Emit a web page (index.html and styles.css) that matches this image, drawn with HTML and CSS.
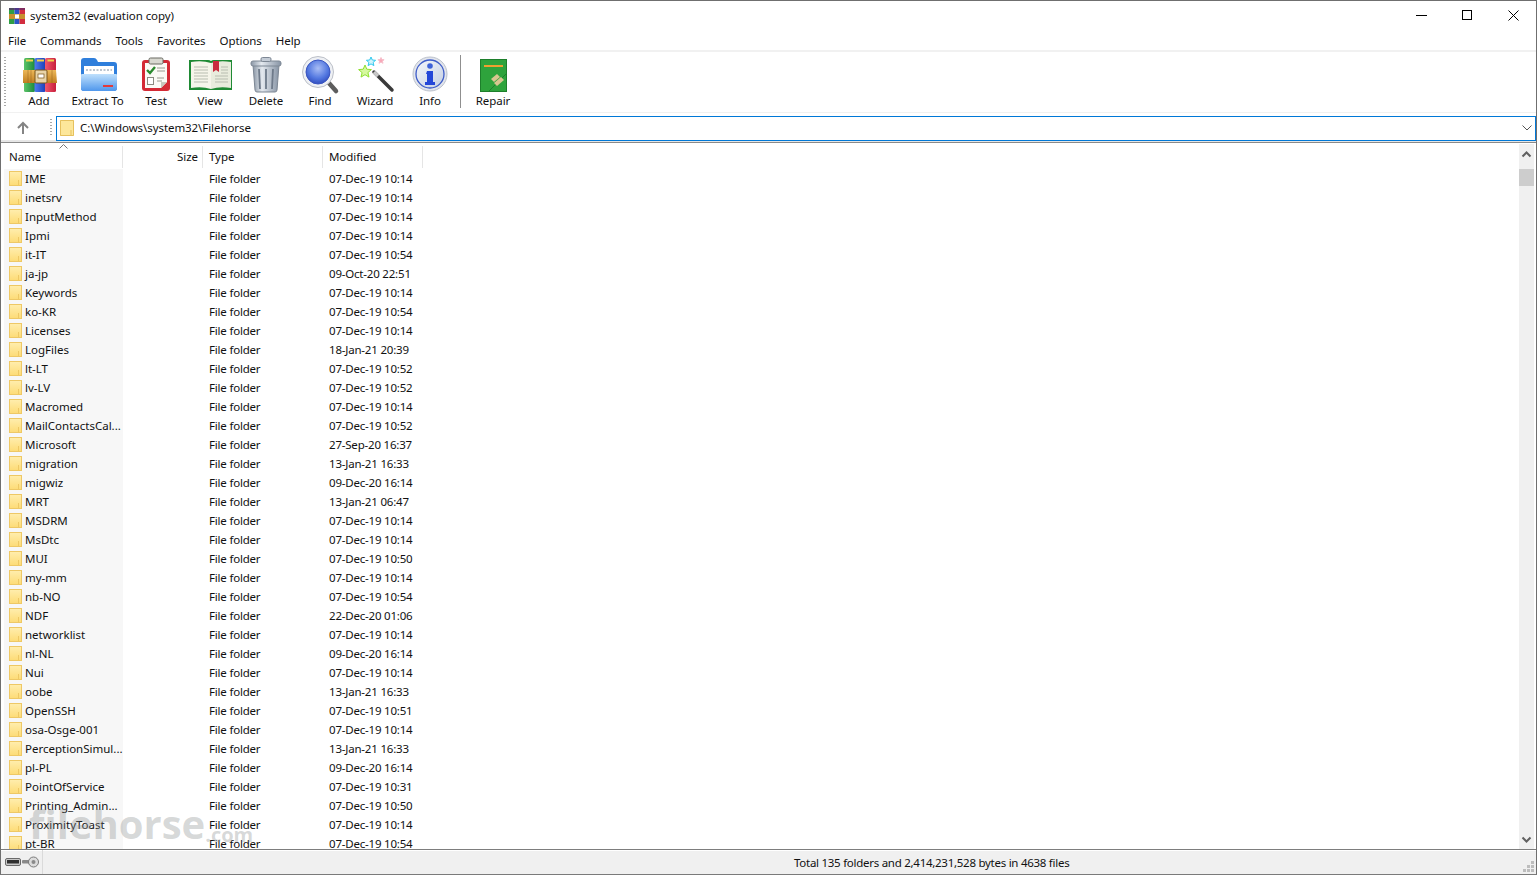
FILE: index.html
```html
<!DOCTYPE html>
<html lang="en">
<head>
<meta charset="utf-8">
<title>system32 (evaluation copy)</title>
<link rel="stylesheet" href="styles.css">
</head>
<body>
<div class="app">
  <header class="titlebar">
    <svg class="app-icon" width="16" height="16" viewBox="0 0 16 16"><rect x="0" y="0" width="5.5" height="16" fill="#2f9e44"/><rect x="5.5" y="0" width="5" height="16" fill="#2b55c8"/><rect x="10.5" y="0" width="5.5" height="16" fill="#d22d3f"/><rect x="0" y="6" width="16" height="5" fill="#c8912e"/><rect x="6" y="6.500" width="4" height="4" fill="#fff"/><rect x="0" y="0" width="16" height="2" fill="#5c2a6c" opacity=".7"/></svg>
    <span class="title-text">system32 (evaluation copy)</span>
    <div class="win-buttons">
      <svg class="win-btn" width="46" height="30" viewBox="0 0 46 30"><path d="M18 14.500h11" stroke="#000" fill="none"/></svg>
      <svg class="win-btn" width="46" height="30" viewBox="0 0 46 30"><rect x="18.500" y="9.500" width="9" height="9" stroke="#000" fill="none"/></svg>
      <svg class="win-btn" width="46" height="30" viewBox="0 0 46 30"><path d="M18.500 9.500l10 10M28.500 9.500l-10 10" stroke="#000" fill="none"/></svg>
    </div>
  </header>
  <nav class="menubar">
    <span class="menu-item">File</span><span class="menu-item">Commands</span><span class="menu-item">Tools</span><span class="menu-item">Favorites</span><span class="menu-item">Options</span><span class="menu-item">Help</span>
  </nav>
  <div class="toolbar">
    <div class="grip"></div>
    <div class="tool w54">
      <svg class="tool-icon" width="44" height="40" viewBox="0 0 44 40">
        <defs>
          <linearGradient id="gG" x1="0" x2="1" y1="0" y2="0"><stop offset="0" stop-color="#5cc46a"/><stop offset="1" stop-color="#1d8a3a"/></linearGradient>
          <linearGradient id="gB" x1="0" x2="1" y1="0" y2="0"><stop offset="0" stop-color="#4f7df0"/><stop offset="1" stop-color="#1b3fb8"/></linearGradient>
          <linearGradient id="gR" x1="0" x2="1" y1="0" y2="0"><stop offset="0" stop-color="#f0586e"/><stop offset="1" stop-color="#c81f3c"/></linearGradient>
          <linearGradient id="gO" x1="0" x2="0" y1="0" y2="1"><stop offset="0" stop-color="#edb95a"/><stop offset="1" stop-color="#c07e20"/></linearGradient>
        </defs>
        <rect x="7" y="3" width="11" height="34" rx="1.5" fill="url(#gG)"/>
        <rect x="17.500" y="3" width="11" height="34" rx="1.5" fill="url(#gB)"/>
        <rect x="28" y="3" width="11" height="34" rx="1.5" fill="url(#gR)"/>
        <path d="M9 5.500h7M20 5.500h7M30.500 5.500h6.500" stroke="#f0d24a" stroke-width="2"/>
        <path d="M6 15l33 0 1 13-34 0z" fill="url(#gO)"/>
        <path d="M11 15v13M14 15v13M35 15v13" stroke="#8a5a17" stroke-opacity=".45"/>
        <rect x="18" y="15" width="12" height="13" rx="1" fill="#e8d4a8" stroke="#7a5418"/>
        <rect x="21" y="19" width="6" height="4" fill="#fff" stroke="#7a5418" stroke-width=".7"/>
      </svg>
      <span class="tool-label">Add</span>
    </div>
    <div class="tool w63">
      <svg class="tool-icon" width="44" height="40" viewBox="0 0 44 40">
        <defs>
          <linearGradient id="fF" x1="0" x2="0" y1="0" y2="1"><stop offset="0" stop-color="#bfe0fc"/><stop offset="1" stop-color="#4f97ec"/></linearGradient>
        </defs>
        <path d="M5 6q0-3 3-3h10q2 0 3 2l1 2h16q3 0 3 3v23q0 3-3 3H8q-3 0-3-3z" fill="#2f7fdc"/>
        <rect x="8" y="11" width="30" height="14" fill="#fff"/>
        <path d="M10 15h26" stroke="#a7b2c0" stroke-width="1.500" stroke-dasharray="2 1.500"/>
        <path d="M5 20q0-1 1-1h34q1 0 1 1v13q0 3-3 3H8q-3 0-3-3z" fill="url(#fF)"/>
        <rect x="27" y="30" width="10" height="2" fill="#e23b3b"/>
      </svg>
      <span class="tool-label">Extract To</span>
    </div>
    <div class="tool w54">
      <svg class="tool-icon" width="44" height="40" viewBox="0 0 44 40">
        <rect x="8" y="5" width="28" height="31" rx="3" fill="#d42a35"/>
        <path d="M11 8h22v19l-6 6H11z" fill="#fbfaf5"/>
        <path d="M27 33l6-6h-6z" fill="#c7c7bd"/>
        <rect x="15" y="3" width="14" height="6" rx="1.500" fill="#d8d8d0" stroke="#6a6a62"/>
        <path d="M13 15l3 3 5-6" stroke="#2a8a2e" stroke-width="2.400" fill="none"/>
        <path d="M23 13h8M23 16h8M23 23h7M23 26h5" stroke="#9a9a90"/>
        <rect x="13.500" y="22.500" width="6" height="7" fill="#fff" stroke="#8a8a80"/>
      </svg>
      <span class="tool-label">Test</span>
    </div>
    <div class="tool w54">
      <svg class="tool-icon" width="44" height="40" viewBox="0 0 44 40">
        <path d="M1 5h19q2 0 3 1 1-1 3-1h19v30H1z" fill="#1f8a34"/>
        <path d="M3 7q11-2 20 1v26q-9-3-20-1z" fill="#f6f5ea"/>
        <path d="M43 7q-11-2-20 1v26q9-3 20-1z" fill="#e9ecdd"/>
        <path d="M6 12h14M6 15h14M6 18h14M6 21h14M6 24h14M6 27h14M33 12h7M33 15h7M33 18h7M27 21h13M27 24h13M27 27h13" stroke="#b8bdb0"/>
        <path d="M25 6h6v11l-3-2-3 2z" fill="#c92a3e"/>
      </svg>
      <span class="tool-label">View</span>
    </div>
    <div class="tool w58">
      <svg class="tool-icon" width="44" height="40" viewBox="0 0 44 40">
        <defs>
          <linearGradient id="tr" x1="0" x2="1" y1="0" y2="0"><stop offset="0" stop-color="#8b97a6"/><stop offset=".35" stop-color="#e4e9ef"/><stop offset="1" stop-color="#8794a5"/></linearGradient>
        </defs>
        <path d="M9 10h26l-2 25q-.2 2-2 2H13q-1.800 0-2-2z" fill="url(#tr)" stroke="#7d8794"/>
        <path d="M15 14l1 20M22 14v20M29 14l-1 20" stroke="#6e7a8a" stroke-width="1.800"/>
        <rect x="7" y="6" width="30" height="5" rx="2" fill="url(#tr)" stroke="#7d8794"/>
        <rect x="17" y="2.500" width="10" height="4" rx="1.500" fill="#c4ccd6" stroke="#7d8794"/>
      </svg>
      <span class="tool-label">Delete</span>
    </div>
    <div class="tool w50">
      <svg class="tool-icon" width="44" height="40" viewBox="0 0 44 40">
        <defs>
          <radialGradient id="ln" cx=".5" cy=".35" r=".7"><stop offset="0" stop-color="#a9bdf5"/><stop offset=".6" stop-color="#5277e0"/><stop offset="1" stop-color="#2c46b8"/></radialGradient>
        </defs>
        <path d="M30 27l8 9" stroke="#5d5d5d" stroke-width="4.500" stroke-linecap="round"/>
        <path d="M27 24l3 3" stroke="#cfcfcf" stroke-width="4"/>
        <circle cx="20" cy="17" r="15.500" fill="#eef0f4" stroke="#bcc0c8"/>
        <circle cx="20" cy="17" r="12" fill="url(#ln)" stroke="#3a55c0"/>
      </svg>
      <span class="tool-label">Find</span>
    </div>
    <div class="tool w60">
      <svg class="tool-icon" width="44" height="40" viewBox="0 0 44 40">
        <path d="M21 17l18 18" stroke="#3a3a3a" stroke-width="3.500" stroke-linecap="round"/>
        <path d="M21 17l4 4" stroke="#c8c8c8" stroke-width="3.500"/>
        <path d="M12 10l1.800 4.200 4.600.4-3.500 3 1.100 4.500-4-2.400-4 2.400 1.100-4.500-3.500-3 4.600-.4z" fill="#d6f8a0" stroke="#8fe030"/>
        <path d="M18 2l1.300 3 3.300.3-2.500 2.100.8 3.200-2.900-1.700-2.900 1.700.8-3.200-2.500-2.100 3.300-.3z" fill="#d0f4fc" stroke="#2fc8ee"/>
        <path d="M28 2.500l.9 2 2.200.2-1.700 1.400.6 2.200-2-1.200-2 1.200.6-2.200-1.700-1.400 2.200-.2z" fill="#f8a8b8" stroke="#f7c0cc"/>
      </svg>
      <span class="tool-label">Wizard</span>
    </div>
    <div class="tool w50">
      <svg class="tool-icon" width="44" height="40" viewBox="0 0 44 40">
        <defs>
          <linearGradient id="inf" x1="0" x2="1" y1="0" y2="1"><stop offset="0" stop-color="#f5f7fb"/><stop offset="1" stop-color="#c4cfe3"/></linearGradient>
        </defs>
        <circle cx="22" cy="19" r="17" fill="#e2e5ec" stroke="#bcc2cc"/>
        <circle cx="22" cy="19" r="14" fill="url(#inf)" stroke="#3d5cc8" stroke-width="1.300"/>
        <circle cx="22" cy="11" r="2.800" fill="#3d62d8"/>
        <path d="M19 16h6v11h2v3h-10v-3h2v-8h-1z" fill="#2447d8"/>
      </svg>
      <span class="tool-label">Info</span>
    </div>
    <div class="tool-sep"></div>
    <div class="tool w54">
      <svg class="tool-icon" width="44" height="40" viewBox="0 0 44 40">
        <rect x="9.500" y="4.500" width="26" height="32" fill="#2ea33c" stroke="#1d7f2b"/>
        <path d="M36 18L18 36" stroke="#1d7f2b"/>
        <rect x="13" y="10" width="19" height="2" fill="#f0a030"/>
        <path d="M20 24l6-5 3 3-6 5z" fill="#d8c690"/>
        <path d="M23 28l7-6 3 3-7 6z" fill="#d8c690"/>
      </svg>
      <span class="tool-label">Repair</span>
    </div>
  </div>
  <div class="addressbar">
    <svg class="up-icon" width="14" height="14" viewBox="0 0 14 14"><path d="M7 13V2M2 7l5-5 5 5" stroke="#848484" stroke-width="2" fill="none"/></svg>
    <div class="grip grip-short"></div>
    <div class="address-box">
      <svg width="14" height="16" viewBox="0 0 14 16"><path d="M0 0h14v16H0z" fill="#fde79a"/><path d="M.5.500h13v15H.500z" fill="none" stroke="#e6c15e"/><path d="M11 10v5" stroke="#e6c15e"/></svg>
      <span class="address-text">C:\Windows\system32\Filehorse</span>
      <svg class="address-chevron" width="10" height="6" viewBox="0 0 10 6"><path d="M.5.500L5 5 9.500.500" stroke="#555" fill="none"/></svg>
    </div>
  </div>
  <main class="listpane">
    <div class="list">
      <div class="row head">
        <span class="cell">Name</span><span class="cell num">Size</span><span class="cell">Type</span><span class="cell">Modified</span>
        <svg class="sort-arrow" width="9" height="5" viewBox="0 0 9 5"><path d="M.5 4.500l4-4 4 4" stroke="#777" fill="none"/></svg>
      </div>
      <div class="rows">
        <div class="row"><span class="cell name"><i class="folder"></i>IME</span><span class="cell num"></span><span class="cell">File folder</span><span class="cell">07-Dec-19 10:14</span></div>
        <div class="row"><span class="cell name"><i class="folder"></i>inetsrv</span><span class="cell num"></span><span class="cell">File folder</span><span class="cell">07-Dec-19 10:14</span></div>
        <div class="row"><span class="cell name"><i class="folder"></i>InputMethod</span><span class="cell num"></span><span class="cell">File folder</span><span class="cell">07-Dec-19 10:14</span></div>
        <div class="row"><span class="cell name"><i class="folder"></i>Ipmi</span><span class="cell num"></span><span class="cell">File folder</span><span class="cell">07-Dec-19 10:14</span></div>
        <div class="row"><span class="cell name"><i class="folder"></i>it-IT</span><span class="cell num"></span><span class="cell">File folder</span><span class="cell">07-Dec-19 10:54</span></div>
        <div class="row"><span class="cell name"><i class="folder"></i>ja-jp</span><span class="cell num"></span><span class="cell">File folder</span><span class="cell">09-Oct-20 22:51</span></div>
        <div class="row"><span class="cell name"><i class="folder"></i>Keywords</span><span class="cell num"></span><span class="cell">File folder</span><span class="cell">07-Dec-19 10:14</span></div>
        <div class="row"><span class="cell name"><i class="folder"></i>ko-KR</span><span class="cell num"></span><span class="cell">File folder</span><span class="cell">07-Dec-19 10:54</span></div>
        <div class="row"><span class="cell name"><i class="folder"></i>Licenses</span><span class="cell num"></span><span class="cell">File folder</span><span class="cell">07-Dec-19 10:14</span></div>
        <div class="row"><span class="cell name"><i class="folder"></i>LogFiles</span><span class="cell num"></span><span class="cell">File folder</span><span class="cell">18-Jan-21 20:39</span></div>
        <div class="row"><span class="cell name"><i class="folder"></i>lt-LT</span><span class="cell num"></span><span class="cell">File folder</span><span class="cell">07-Dec-19 10:52</span></div>
        <div class="row"><span class="cell name"><i class="folder"></i>lv-LV</span><span class="cell num"></span><span class="cell">File folder</span><span class="cell">07-Dec-19 10:52</span></div>
        <div class="row"><span class="cell name"><i class="folder"></i>Macromed</span><span class="cell num"></span><span class="cell">File folder</span><span class="cell">07-Dec-19 10:14</span></div>
        <div class="row"><span class="cell name"><i class="folder"></i>MailContactsCal...</span><span class="cell num"></span><span class="cell">File folder</span><span class="cell">07-Dec-19 10:52</span></div>
        <div class="row"><span class="cell name"><i class="folder"></i>Microsoft</span><span class="cell num"></span><span class="cell">File folder</span><span class="cell">27-Sep-20 16:37</span></div>
        <div class="row"><span class="cell name"><i class="folder"></i>migration</span><span class="cell num"></span><span class="cell">File folder</span><span class="cell">13-Jan-21 16:33</span></div>
        <div class="row"><span class="cell name"><i class="folder"></i>migwiz</span><span class="cell num"></span><span class="cell">File folder</span><span class="cell">09-Dec-20 16:14</span></div>
        <div class="row"><span class="cell name"><i class="folder"></i>MRT</span><span class="cell num"></span><span class="cell">File folder</span><span class="cell">13-Jan-21 06:47</span></div>
        <div class="row"><span class="cell name"><i class="folder"></i>MSDRM</span><span class="cell num"></span><span class="cell">File folder</span><span class="cell">07-Dec-19 10:14</span></div>
        <div class="row"><span class="cell name"><i class="folder"></i>MsDtc</span><span class="cell num"></span><span class="cell">File folder</span><span class="cell">07-Dec-19 10:14</span></div>
        <div class="row"><span class="cell name"><i class="folder"></i>MUI</span><span class="cell num"></span><span class="cell">File folder</span><span class="cell">07-Dec-19 10:50</span></div>
        <div class="row"><span class="cell name"><i class="folder"></i>my-mm</span><span class="cell num"></span><span class="cell">File folder</span><span class="cell">07-Dec-19 10:14</span></div>
        <div class="row"><span class="cell name"><i class="folder"></i>nb-NO</span><span class="cell num"></span><span class="cell">File folder</span><span class="cell">07-Dec-19 10:54</span></div>
        <div class="row"><span class="cell name"><i class="folder"></i>NDF</span><span class="cell num"></span><span class="cell">File folder</span><span class="cell">22-Dec-20 01:06</span></div>
        <div class="row"><span class="cell name"><i class="folder"></i>networklist</span><span class="cell num"></span><span class="cell">File folder</span><span class="cell">07-Dec-19 10:14</span></div>
        <div class="row"><span class="cell name"><i class="folder"></i>nl-NL</span><span class="cell num"></span><span class="cell">File folder</span><span class="cell">09-Dec-20 16:14</span></div>
        <div class="row"><span class="cell name"><i class="folder"></i>Nui</span><span class="cell num"></span><span class="cell">File folder</span><span class="cell">07-Dec-19 10:14</span></div>
        <div class="row"><span class="cell name"><i class="folder"></i>oobe</span><span class="cell num"></span><span class="cell">File folder</span><span class="cell">13-Jan-21 16:33</span></div>
        <div class="row"><span class="cell name"><i class="folder"></i>OpenSSH</span><span class="cell num"></span><span class="cell">File folder</span><span class="cell">07-Dec-19 10:51</span></div>
        <div class="row"><span class="cell name"><i class="folder"></i>osa-Osge-001</span><span class="cell num"></span><span class="cell">File folder</span><span class="cell">07-Dec-19 10:14</span></div>
        <div class="row"><span class="cell name"><i class="folder"></i>PerceptionSimul...</span><span class="cell num"></span><span class="cell">File folder</span><span class="cell">13-Jan-21 16:33</span></div>
        <div class="row"><span class="cell name"><i class="folder"></i>pl-PL</span><span class="cell num"></span><span class="cell">File folder</span><span class="cell">09-Dec-20 16:14</span></div>
        <div class="row"><span class="cell name"><i class="folder"></i>PointOfService</span><span class="cell num"></span><span class="cell">File folder</span><span class="cell">07-Dec-19 10:31</span></div>
        <div class="row"><span class="cell name"><i class="folder"></i>Printing_Admin...</span><span class="cell num"></span><span class="cell">File folder</span><span class="cell">07-Dec-19 10:50</span></div>
        <div class="row"><span class="cell name"><i class="folder"></i>ProximityToast</span><span class="cell num"></span><span class="cell">File folder</span><span class="cell">07-Dec-19 10:14</span></div>
        <div class="row"><span class="cell name"><i class="folder"></i>pt-BR</span><span class="cell num"></span><span class="cell">File folder</span><span class="cell">07-Dec-19 10:54</span></div>
      </div>
    </div>
    <div class="scrollbar">
      <svg class="sb-arrow" width="15" height="25" viewBox="0 0 15 25"><path d="M3.500 12.500l4-4 4 4" stroke="#606060" stroke-width="2" fill="none"/></svg>
      <div class="sb-thumb"></div>
      <svg class="sb-arrow sb-down" width="15" height="17" viewBox="0 0 15 17"><path d="M3.500 5.500l4 4 4-4" stroke="#606060" stroke-width="2" fill="none"/></svg>
    </div>
    <div class="watermark">filehorse<small>.com</small></div>
  </main>
  <footer class="statusbar">
    <div class="status-icons">
      <svg width="16" height="10" viewBox="0 0 16 10"><rect x=".5" y="1.500" width="15" height="7" rx="1.500" fill="#c8c8c8" stroke="#6a6a6a"/><rect x="2" y="3" width="12" height="3.500" fill="#303030"/></svg>
      <svg width="17" height="12" viewBox="0 0 17 12"><rect x="0" y="4" width="10" height="3.500" rx="1" fill="#8a8a8a"/><circle cx="11.500" cy="6" r="5" fill="#dcdcdc" stroke="#7a7a7a"/><circle cx="11.500" cy="6" r="2" fill="#8a8a8a"/></svg>
    </div>
    <span class="status-text">Total 135 folders and 2,414,231,528 bytes in 4638 files</span>
    <svg class="size-grip" width="12" height="12" viewBox="0 0 12 12"><path d="M8 0h3v3H8zM8 4h3v3H8zM4 4h3v3H4zM8 8h3v3H8zM4 8h3v3H4zM0 8h3v3H0z" fill="#bdbdbd"/></svg>
  </footer>
</div>
</body>
</html>
```
FILE: styles.css
```css
* { box-sizing: border-box; }
html, body { margin: 0; padding: 0; height: 100%; overflow: hidden; }
body { font: 11.5px/16px "Noto Sans", "Open Sans", sans-serif; letter-spacing: -.07px; color: #111; background: #fff; }

.app { height: 875px; width: 1537px; display: flex; flex-direction: column; border: 1px solid #6f6f6f; border-bottom-color: #7a7a7a; background: #fff; }

.titlebar { height: 30px; display: flex; align-items: center; padding-left: 8px; flex: none; }
.app-icon { flex: none; margin-right: 5px; }
.title-text { flex: 1; }
.win-buttons { display: flex; align-self: flex-start; }
.win-btn { display: block; }

.menubar { height: 19px; flex: none; display: flex; gap: 14px; padding-left: 7px; align-items: center; }

.toolbar { height: 62px; flex: none; display: flex; align-items: stretch; border-top: 2px solid #f1f1f1; padding-left: 1px; position: relative; }
.grip { width: 2px; margin: 5px 6px 4px 2px; flex: none; background-image: linear-gradient(#a8a8a8 50%, transparent 50%); background-size: 2px 3px; }
.tool { display: flex; flex-direction: column; align-items: center; flex: none; padding-top: 3px; }
.tool-icon { display: block; flex: none; }
.tool-label { line-height: 16px; margin-top: -2px; white-space: nowrap; }
.w50 { width: 50px; }
.w54 { width: 54px; }
.w58 { width: 58px; }
.w60 { width: 60px; }
.w63 { width: 63px; }
.tool-sep { width: 1px; margin: 3px 5px 4px 5px; background: #8f8f8f; flex: none; }

.addressbar { height: 31px; flex: none; display: flex; align-items: center; border-top: 1px solid #f1f1f1; border-bottom: 1px solid #8a8a8a; padding-left: 15px; box-shadow: inset 0 -2px 0 #e6e6e6; }
.up-icon { flex: none; margin-right: 20px; }
.grip-short { height: 18px; margin: 0 4px 0 0; }
.address-box { flex: 1; height: 25px; margin-top: 1px; border: 1px solid #0078d7; display: flex; align-items: center; padding: 0 3px; gap: 6px; background: #fff; }
.address-text { flex: 1; }
.address-chevron { flex: none; }

.listpane { flex: 1; min-height: 0; display: flex; position: relative; overflow: hidden; padding-left: 3px; padding-top: 1px; }
.list { flex: 1; min-width: 0; overflow: hidden; }
.row { display: grid; grid-template-columns: 119px 80px 120px 100px; height: 19px; align-items: center; letter-spacing: -.2px; }
.head { height: 25px; position: relative; align-items: start; letter-spacing: -.07px; }
.head .cell { height: 22px; line-height: 22px; border-right: 1px solid #e5e5e5; margin-top: 2px; }
.head .cell:first-child { padding-left: 5px; }
.head .cell.num { text-align: right; padding-right: 4px; padding-left: 0; }
.cell { padding-left: 6px; white-space: nowrap; overflow: hidden; line-height: 19px; display: block; height: 19px; }
.sort-arrow { position: absolute; left: 55px; top: 0; }
.rows { width: 419px; }
.cell.name { padding-left: 5px; background: #f7f7f7; display: flex; align-items: center; gap: 3px; letter-spacing: 0; }
.folder { display: block; width: 13px; height: 15px; flex: none; background: linear-gradient(#ffedac, #fddc78); border: 1px solid #eec865; position: relative; }
.folder::after { content: ""; position: absolute; right: 2px; bottom: 0; height: 5px; border-left: 1px solid #eec865; }

.scrollbar { width: 15px; margin-right: 2px; background: #f0f0f0; display: flex; flex-direction: column; flex: none; }
.sb-arrow { display: block; flex: none; }
.sb-thumb { height: 17px; background: #cdcdcd; flex: none; }
.sb-down { margin-top: auto; }

.watermark { position: absolute; left: 28px; top: 657px; font: 700 40px/48px "Open Sans", sans-serif; letter-spacing: 0; color: rgba(140, 145, 145, .36); pointer-events: none; white-space: nowrap; }
.watermark small { font-size: 20px; vertical-align: -3px; }

.statusbar { height: 25px; flex: none; display: flex; align-items: center; background: #f0f0f0; border-top: 1px solid #7d7d7d; box-shadow: inset 0 1px 0 #fff; position: relative; }
.status-icons { width: 42px; height: 100%; border-right: 1px solid #dadada; display: flex; align-items: center; padding-left: 4px; gap: 1px; flex: none; }
.status-text { margin-left: 751px; padding-top: 2px; letter-spacing: -.27px; }
.size-grip { position: absolute; right: 1px; bottom: 1px; }
```
